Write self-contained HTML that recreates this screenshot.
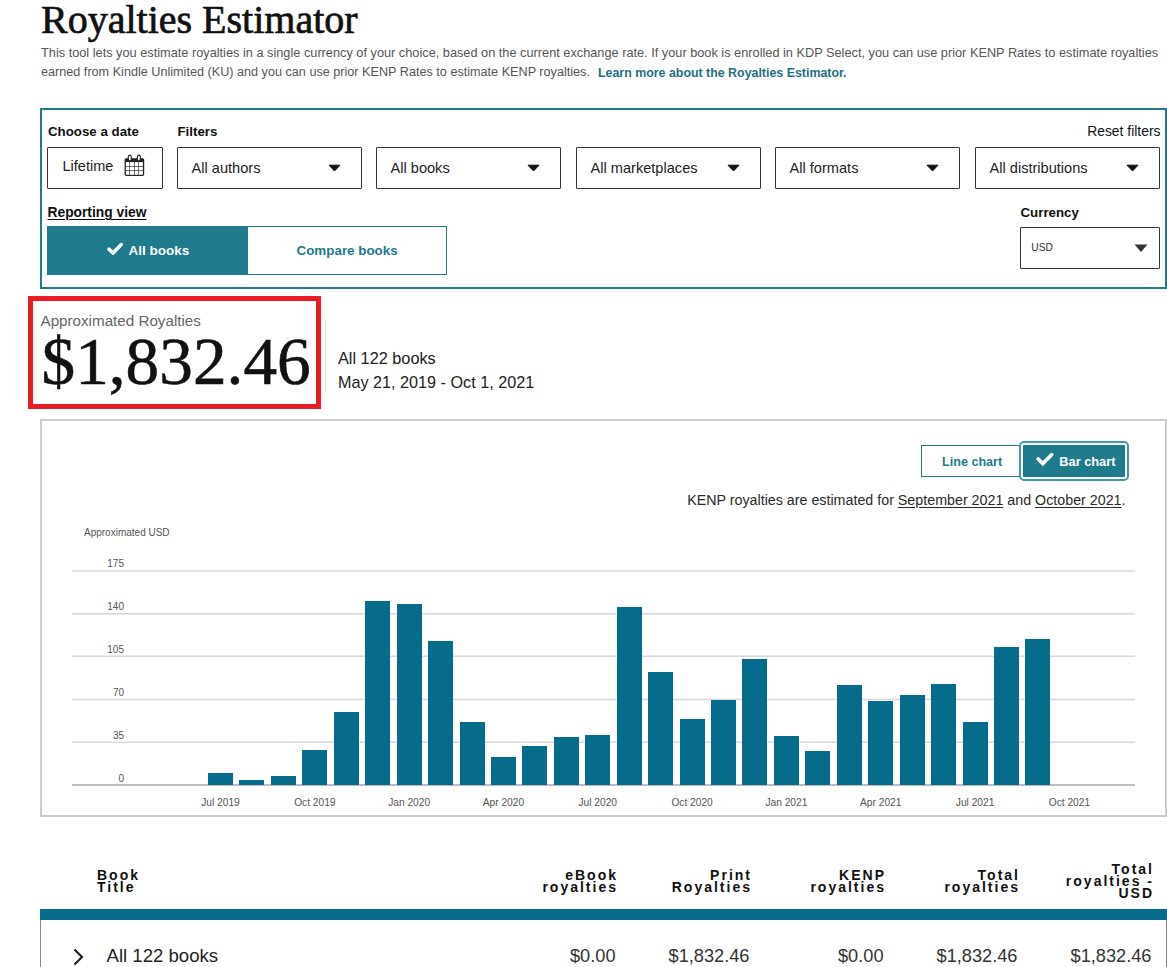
<!DOCTYPE html>
<html><head><meta charset="utf-8"><title>Royalties Estimator</title>
<style>
html,body{margin:0;padding:0;background:#fff;width:1167px;height:967px;overflow:hidden;}
body{position:relative;font-family:"Liberation Sans", sans-serif;}
.t{position:absolute;white-space:nowrap;}
.r{position:absolute;}
u{text-decoration:underline;text-underline-offset:2px;}
</style></head><body>
<div class="t" style="top:0.10px;font-size:40px;line-height:40px;font-weight:400;color:#111;font-family:'Liberation Serif', serif;left:41px;-webkit-text-stroke:0.7px #111;">Royalties Estimator</div>
<div class="t" style="top:46.61px;font-size:12.75px;line-height:12.75px;font-weight:400;color:#555;font-family:'Liberation Sans', sans-serif;left:41px;">This tool lets you estimate royalties in a single currency of your choice, based on the current exchange rate. If your book is enrolled in KDP Select, you can use prior KENP Rates to estimate royalties</div>
<div class="t" style="top:66.39px;font-size:12.65px;line-height:12.65px;font-weight:400;color:#555;font-family:'Liberation Sans', sans-serif;left:41px;">earned from Kindle Unlimited (KU) and you can use prior KENP Rates to estimate KENP royalties.</div>
<div class="t" style="top:66.60px;font-size:12.4px;line-height:12.4px;font-weight:700;color:#1f6f82;font-family:'Liberation Sans', sans-serif;left:598px;">Learn more about the Royalties Estimator.</div>
<div class="r" style="left:40px;top:108px;width:1127px;height:181px;border:2px solid #1f7a8c;box-sizing:border-box;"></div>
<div class="t" style="top:125.24px;font-size:13.3px;line-height:13.3px;font-weight:700;color:#0f1111;font-family:'Liberation Sans', sans-serif;left:48px;">Choose a date</div>
<div class="t" style="top:125.34px;font-size:13.3px;line-height:13.3px;font-weight:700;color:#0f1111;font-family:'Liberation Sans', sans-serif;left:177.5px;">Filters</div>
<div class="t" style="top:125.23px;font-size:13.9px;line-height:13.9px;font-weight:400;color:#0f1111;font-family:'Liberation Sans', sans-serif;right:6.5px;text-align:right;">Reset filters</div>
<div class="r" style="left:47px;top:147px;width:116px;height:42px;border:1px solid #333;box-sizing:border-box;border-radius:1px;"></div>
<div class="t" style="top:158.93px;font-size:14.5px;line-height:14.5px;font-weight:400;color:#222;font-family:'Liberation Sans', sans-serif;left:62.5px;">Lifetime</div>
<svg class="r" style="left:124px;top:154px" width="22" height="23" viewBox="0 0 22 23">
<rect x="0.6" y="4.2" width="19.6" height="17.7" rx="1.6" fill="#222"/><rect x="1.9" y="8.1" width="3.40" height="4.10" fill="#fff"/><rect x="5.9" y="8.1" width="4.30" height="4.10" fill="#fff"/><rect x="10.8" y="8.1" width="3.60" height="4.10" fill="#fff"/><rect x="15.0" y="8.1" width="3.90" height="4.10" fill="#fff"/><rect x="1.9" y="12.8" width="3.40" height="3.30" fill="#fff"/><rect x="5.9" y="12.8" width="4.30" height="3.30" fill="#fff"/><rect x="10.8" y="12.8" width="3.60" height="3.30" fill="#fff"/><rect x="15.0" y="12.8" width="3.90" height="3.30" fill="#fff"/><rect x="1.9" y="16.7" width="3.40" height="4.10" fill="#fff"/><rect x="5.9" y="16.7" width="4.30" height="4.10" fill="#fff"/><rect x="10.8" y="16.7" width="3.60" height="4.10" fill="#fff"/><rect x="15.0" y="16.7" width="3.90" height="4.10" fill="#fff"/>
<ellipse cx="5.8" cy="4.1" rx="1.6" ry="3" fill="#fff" stroke="#222" stroke-width="1.1"/>
<ellipse cx="14.9" cy="4.1" rx="1.6" ry="3" fill="#fff" stroke="#222" stroke-width="1.1"/>
</svg>
<div class="r" style="left:177px;top:147px;width:185px;height:42px;border:1px solid #333;box-sizing:border-box;border-radius:1px;"></div>
<div class="t" style="top:161.44px;font-size:14.6px;line-height:14.6px;font-weight:400;color:#222;font-family:'Liberation Sans', sans-serif;left:191.5px;">All authors</div>
<svg class="r" style="left:328px;top:164px" width="13" height="8" viewBox="0 0 13 8"><path d="M1 1.2 L12 1.2 L6.5 7 Z" fill="#111" stroke="#111" stroke-width="1" stroke-linejoin="round"/></svg>
<div class="r" style="left:376px;top:147px;width:185px;height:42px;border:1px solid #333;box-sizing:border-box;border-radius:1px;"></div>
<div class="t" style="top:161.44px;font-size:14.6px;line-height:14.6px;font-weight:400;color:#222;font-family:'Liberation Sans', sans-serif;left:390.5px;">All books</div>
<svg class="r" style="left:527px;top:164px" width="13" height="8" viewBox="0 0 13 8"><path d="M1 1.2 L12 1.2 L6.5 7 Z" fill="#111" stroke="#111" stroke-width="1" stroke-linejoin="round"/></svg>
<div class="r" style="left:576px;top:147px;width:185px;height:42px;border:1px solid #333;box-sizing:border-box;border-radius:1px;"></div>
<div class="t" style="top:161.44px;font-size:14.6px;line-height:14.6px;font-weight:400;color:#222;font-family:'Liberation Sans', sans-serif;left:590.5px;">All marketplaces</div>
<svg class="r" style="left:727px;top:164px" width="13" height="8" viewBox="0 0 13 8"><path d="M1 1.2 L12 1.2 L6.5 7 Z" fill="#111" stroke="#111" stroke-width="1" stroke-linejoin="round"/></svg>
<div class="r" style="left:775px;top:147px;width:185px;height:42px;border:1px solid #333;box-sizing:border-box;border-radius:1px;"></div>
<div class="t" style="top:161.44px;font-size:14.6px;line-height:14.6px;font-weight:400;color:#222;font-family:'Liberation Sans', sans-serif;left:789.5px;">All formats</div>
<svg class="r" style="left:926px;top:164px" width="13" height="8" viewBox="0 0 13 8"><path d="M1 1.2 L12 1.2 L6.5 7 Z" fill="#111" stroke="#111" stroke-width="1" stroke-linejoin="round"/></svg>
<div class="r" style="left:975px;top:147px;width:185px;height:42px;border:1px solid #333;box-sizing:border-box;border-radius:1px;"></div>
<div class="t" style="top:161.44px;font-size:14.6px;line-height:14.6px;font-weight:400;color:#222;font-family:'Liberation Sans', sans-serif;left:989.5px;">All distributions</div>
<svg class="r" style="left:1126px;top:164px" width="13" height="8" viewBox="0 0 13 8"><path d="M1 1.2 L12 1.2 L6.5 7 Z" fill="#111" stroke="#111" stroke-width="1" stroke-linejoin="round"/></svg>
<div class="t" style="top:206.12px;font-size:13.8px;line-height:13.8px;font-weight:700;color:#0f1111;font-family:'Liberation Sans', sans-serif;left:47.5px;"><u>Reporting view</u></div>
<div class="t" style="top:205.74px;font-size:13.3px;line-height:13.3px;font-weight:700;color:#0f1111;font-family:'Liberation Sans', sans-serif;left:1020.5px;">Currency</div>
<div class="r" style="left:47px;top:226px;width:201px;height:49px;background:#1f7a8c;"></div>
<svg class="r" style="left:107px;top:242px" width="16" height="13" viewBox="0 0 16 13"><path d="M2 7.2 L6 11 L14.2 2.6" fill="none" stroke="#fff" stroke-width="3.6" stroke-linecap="round"/></svg>
<div class="t" style="top:243.87px;font-size:13.5px;line-height:13.5px;font-weight:700;color:#fff;font-family:'Liberation Sans', sans-serif;left:128.5px;">All books</div>
<div class="r" style="left:247px;top:226px;width:200px;height:49px;border:1px solid #1f7a8c;box-sizing:border-box;"></div>
<div class="t" style="top:244.26px;font-size:13.4px;line-height:13.4px;font-weight:700;color:#1f7a8c;font-family:'Liberation Sans', sans-serif;left:296.5px;">Compare books</div>
<div class="r" style="left:1020px;top:227px;width:140px;height:42px;border:1px solid #333;box-sizing:border-box;border-radius:1px;"></div>
<div class="t" style="top:243.37px;font-size:10.2px;line-height:10.2px;font-weight:400;color:#333;font-family:'Liberation Sans', sans-serif;left:1031.3px;">USD</div>
<svg class="r" style="left:1134px;top:244px" width="14" height="9" viewBox="0 0 14 9"><path d="M0.5 0.5 L13.5 0.5 L7 8 Z" fill="#333"/></svg>
<div class="r" style="left:28px;top:296px;width:293px;height:113px;border:5px solid #ea1c25;box-sizing:border-box;"></div>
<div class="t" style="top:313.33px;font-size:15.2px;line-height:15.2px;font-weight:400;color:#666;font-family:'Liberation Sans', sans-serif;left:40.5px;">Approximated Royalties</div>
<div class="t" style="top:328.44px;font-size:67.3px;line-height:67.3px;font-weight:400;color:#111;font-family:'Liberation Serif', serif;left:41.5px;-webkit-text-stroke:0.6px #111;">$1,832.46</div>
<div class="r" style="left:325px;top:321px;width:1px;height:70px;background:#d5d5d5;"></div>
<div class="t" style="top:350.20px;font-size:16.3px;line-height:16.3px;font-weight:400;color:#222;font-family:'Liberation Sans', sans-serif;left:338px;">All 122 books</div>
<div class="t" style="top:373.99px;font-size:16.2px;line-height:16.2px;font-weight:400;color:#222;font-family:'Liberation Sans', sans-serif;left:338px;">May 21, 2019 - Oct 1, 2021</div>
<div class="r" style="left:40px;top:419px;width:1127px;height:398px;border:2px solid #ccc;box-sizing:border-box;"></div>
<div class="r" style="left:921px;top:445px;width:100px;height:32px;border:1px solid #1f7a8c;box-sizing:border-box;"></div>
<div class="t" style="top:456.33px;font-size:12.6px;line-height:12.6px;font-weight:700;color:#1f7a8c;font-family:'Liberation Sans', sans-serif;left:942px;">Line chart</div>
<div class="r" style="left:1019px;top:441px;width:110px;height:40px;border:2px solid #3f9cb0;border-radius:5px;box-sizing:border-box;"></div>
<div class="r" style="left:1023px;top:445px;width:102px;height:32px;background:#1f7a8c;border-radius:1px;"></div>
<svg class="r" style="left:1036px;top:452px" width="18" height="15" viewBox="0 0 18 15"><path d="M2.2 7 L6.8 11.6 L15.8 2.6" fill="none" stroke="#fff" stroke-width="3.6" stroke-linecap="round"/></svg>
<div class="t" style="top:456.16px;font-size:12.8px;line-height:12.8px;font-weight:700;color:#fff;font-family:'Liberation Sans', sans-serif;left:1059.3px;">Bar chart</div>
<div class="t" style="top:492.71px;font-size:14.28px;line-height:14.28px;font-weight:400;color:#2a2a2a;font-family:'Liberation Sans', sans-serif;right:41.5px;text-align:right;">KENP royalties are estimated for <u>September 2021</u> and <u>October 2021</u>.</div>
<div class="t" style="top:527.83px;font-size:10px;line-height:10px;font-weight:400;color:#555;font-family:'Liberation Sans', sans-serif;left:84px;">Approximated USD</div>
<svg class="r" style="left:0;top:0" width="1167" height="967"><line x1="72" x2="1135" y1="571.0" y2="571.0" stroke="#d8d8d8" stroke-width="1.4"/><line x1="72" x2="1135" y1="613.7" y2="613.7" stroke="#d8d8d8" stroke-width="1.4"/><line x1="72" x2="1135" y1="656.3" y2="656.3" stroke="#d8d8d8" stroke-width="1.4"/><line x1="72" x2="1135" y1="699.5" y2="699.5" stroke="#d8d8d8" stroke-width="1.4"/><line x1="72" x2="1135" y1="742.3" y2="742.3" stroke="#d8d8d8" stroke-width="1.4"/></svg>
<div class="t" style="top:559.33px;font-size:10px;line-height:10px;font-weight:400;color:#555;font-family:'Liberation Sans', sans-serif;right:1043px;text-align:right;">175</div>
<div class="t" style="top:602.03px;font-size:10px;line-height:10px;font-weight:400;color:#555;font-family:'Liberation Sans', sans-serif;right:1043px;text-align:right;">140</div>
<div class="t" style="top:644.63px;font-size:10px;line-height:10px;font-weight:400;color:#555;font-family:'Liberation Sans', sans-serif;right:1043px;text-align:right;">105</div>
<div class="t" style="top:687.83px;font-size:10px;line-height:10px;font-weight:400;color:#555;font-family:'Liberation Sans', sans-serif;right:1043px;text-align:right;">70</div>
<div class="t" style="top:730.63px;font-size:10px;line-height:10px;font-weight:400;color:#555;font-family:'Liberation Sans', sans-serif;right:1043px;text-align:right;">35</div>
<div class="t" style="top:773.53px;font-size:10px;line-height:10px;font-weight:400;color:#555;font-family:'Liberation Sans', sans-serif;right:1043px;text-align:right;">0</div>
<div class="r" style="left:72px;top:784px;width:1063px;height:2px;background:#bdbdbd;"></div>
<div class="r" style="left:208.00px;top:772.8px;width:25px;height:12.4px;background:#076b8c;"></div>
<div class="r" style="left:239.44px;top:780.0px;width:25px;height:5.2px;background:#076b8c;"></div>
<div class="r" style="left:270.88px;top:776.0px;width:25px;height:9.2px;background:#076b8c;"></div>
<div class="r" style="left:302.32px;top:750.3px;width:25px;height:34.9px;background:#076b8c;"></div>
<div class="r" style="left:333.76px;top:712.0px;width:25px;height:73.2px;background:#076b8c;"></div>
<div class="r" style="left:365.20px;top:600.6px;width:25px;height:184.6px;background:#076b8c;"></div>
<div class="r" style="left:396.64px;top:603.9px;width:25px;height:181.3px;background:#076b8c;"></div>
<div class="r" style="left:428.08px;top:641.4px;width:25px;height:143.8px;background:#076b8c;"></div>
<div class="r" style="left:459.52px;top:722.3px;width:25px;height:62.9px;background:#076b8c;"></div>
<div class="r" style="left:490.96px;top:756.6px;width:25px;height:28.6px;background:#076b8c;"></div>
<div class="r" style="left:522.40px;top:746.2px;width:25px;height:39.0px;background:#076b8c;"></div>
<div class="r" style="left:553.84px;top:737.2px;width:25px;height:48.0px;background:#076b8c;"></div>
<div class="r" style="left:585.28px;top:734.8px;width:25px;height:50.4px;background:#076b8c;"></div>
<div class="r" style="left:616.72px;top:606.9px;width:25px;height:178.3px;background:#076b8c;"></div>
<div class="r" style="left:648.16px;top:671.7px;width:25px;height:113.5px;background:#076b8c;"></div>
<div class="r" style="left:679.60px;top:719.1px;width:25px;height:66.1px;background:#076b8c;"></div>
<div class="r" style="left:711.04px;top:699.6px;width:25px;height:85.6px;background:#076b8c;"></div>
<div class="r" style="left:742.48px;top:658.7px;width:25px;height:126.5px;background:#076b8c;"></div>
<div class="r" style="left:773.92px;top:736.0px;width:25px;height:49.2px;background:#076b8c;"></div>
<div class="r" style="left:805.36px;top:751.3px;width:25px;height:33.9px;background:#076b8c;"></div>
<div class="r" style="left:836.80px;top:684.6px;width:25px;height:100.6px;background:#076b8c;"></div>
<div class="r" style="left:868.24px;top:700.8px;width:25px;height:84.4px;background:#076b8c;"></div>
<div class="r" style="left:899.68px;top:694.6px;width:25px;height:90.6px;background:#076b8c;"></div>
<div class="r" style="left:931.12px;top:684.4px;width:25px;height:100.8px;background:#076b8c;"></div>
<div class="r" style="left:962.56px;top:722.2px;width:25px;height:63.0px;background:#076b8c;"></div>
<div class="r" style="left:994.00px;top:646.9px;width:25px;height:138.3px;background:#076b8c;"></div>
<div class="r" style="left:1025.44px;top:639.3px;width:25px;height:145.9px;background:#076b8c;"></div>
<div class="t" style="top:797.97px;font-size:10.2px;line-height:10.2px;font-weight:400;color:#555;font-family:'Liberation Sans', sans-serif;left:-79.5px;width:600px;text-align:center;">Jul 2019</div>
<div class="t" style="top:797.97px;font-size:10.2px;line-height:10.2px;font-weight:400;color:#555;font-family:'Liberation Sans', sans-serif;left:14.819999999999993px;width:600px;text-align:center;">Oct 2019</div>
<div class="t" style="top:797.97px;font-size:10.2px;line-height:10.2px;font-weight:400;color:#555;font-family:'Liberation Sans', sans-serif;left:109.13999999999999px;width:600px;text-align:center;">Jan 2020</div>
<div class="t" style="top:797.97px;font-size:10.2px;line-height:10.2px;font-weight:400;color:#555;font-family:'Liberation Sans', sans-serif;left:203.46000000000004px;width:600px;text-align:center;">Apr 2020</div>
<div class="t" style="top:797.97px;font-size:10.2px;line-height:10.2px;font-weight:400;color:#555;font-family:'Liberation Sans', sans-serif;left:297.78px;width:600px;text-align:center;">Jul 2020</div>
<div class="t" style="top:797.97px;font-size:10.2px;line-height:10.2px;font-weight:400;color:#555;font-family:'Liberation Sans', sans-serif;left:392.1px;width:600px;text-align:center;">Oct 2020</div>
<div class="t" style="top:797.97px;font-size:10.2px;line-height:10.2px;font-weight:400;color:#555;font-family:'Liberation Sans', sans-serif;left:486.4200000000001px;width:600px;text-align:center;">Jan 2021</div>
<div class="t" style="top:797.97px;font-size:10.2px;line-height:10.2px;font-weight:400;color:#555;font-family:'Liberation Sans', sans-serif;left:580.74px;width:600px;text-align:center;">Apr 2021</div>
<div class="t" style="top:797.97px;font-size:10.2px;line-height:10.2px;font-weight:400;color:#555;font-family:'Liberation Sans', sans-serif;left:675.0600000000001px;width:600px;text-align:center;">Jul 2021</div>
<div class="t" style="top:797.97px;font-size:10.2px;line-height:10.2px;font-weight:400;color:#555;font-family:'Liberation Sans', sans-serif;left:769.3800000000001px;width:600px;text-align:center;">Oct 2021</div>
<div class="t" style="top:867.65px;font-size:14px;line-height:14px;font-weight:700;color:#111;font-family:'Liberation Sans', sans-serif;letter-spacing:2.0px;left:97px;">Book</div>
<div class="t" style="top:879.65px;font-size:14px;line-height:14px;font-weight:700;color:#111;font-family:'Liberation Sans', sans-serif;letter-spacing:2.0px;left:97px;">Title</div>
<div class="t" style="top:867.65px;font-size:14px;line-height:14px;font-weight:700;color:#111;font-family:'Liberation Sans', sans-serif;letter-spacing:2.0px;right:549.0px;text-align:right;">eBook</div>
<div class="t" style="top:879.65px;font-size:14px;line-height:14px;font-weight:700;color:#111;font-family:'Liberation Sans', sans-serif;letter-spacing:2.0px;right:549.0px;text-align:right;">royalties</div>
<div class="t" style="top:867.65px;font-size:14px;line-height:14px;font-weight:700;color:#111;font-family:'Liberation Sans', sans-serif;letter-spacing:2.0px;right:415.0px;text-align:right;">Print</div>
<div class="t" style="top:879.65px;font-size:14px;line-height:14px;font-weight:700;color:#111;font-family:'Liberation Sans', sans-serif;letter-spacing:2.0px;right:415.0px;text-align:right;">Royalties</div>
<div class="t" style="top:867.65px;font-size:14px;line-height:14px;font-weight:700;color:#111;font-family:'Liberation Sans', sans-serif;letter-spacing:2.0px;right:281.0px;text-align:right;">KENP</div>
<div class="t" style="top:879.65px;font-size:14px;line-height:14px;font-weight:700;color:#111;font-family:'Liberation Sans', sans-serif;letter-spacing:2.0px;right:281.0px;text-align:right;">royalties</div>
<div class="t" style="top:867.65px;font-size:14px;line-height:14px;font-weight:700;color:#111;font-family:'Liberation Sans', sans-serif;letter-spacing:2.0px;right:147.0px;text-align:right;">Total</div>
<div class="t" style="top:879.65px;font-size:14px;line-height:14px;font-weight:700;color:#111;font-family:'Liberation Sans', sans-serif;letter-spacing:2.0px;right:147.0px;text-align:right;">royalties</div>
<div class="t" style="top:861.75px;font-size:14px;line-height:14px;font-weight:700;color:#111;font-family:'Liberation Sans', sans-serif;letter-spacing:2.0px;right:13.0px;text-align:right;">Total</div>
<div class="t" style="top:873.85px;font-size:14px;line-height:14px;font-weight:700;color:#111;font-family:'Liberation Sans', sans-serif;letter-spacing:2.0px;right:13.0px;text-align:right;">royalties -</div>
<div class="t" style="top:885.75px;font-size:14px;line-height:14px;font-weight:700;color:#111;font-family:'Liberation Sans', sans-serif;letter-spacing:2.0px;right:13.0px;text-align:right;">USD</div>
<div class="r" style="left:40px;top:909px;width:1127px;height:11px;background:#076b8c;"></div>
<div class="r" style="left:40px;top:920px;width:1px;height:47px;background:#8a8a8a;"></div>
<div class="r" style="left:1166px;top:920px;width:1px;height:47px;background:#8a8a8a;"></div>
<svg class="r" style="left:72px;top:948px" width="13" height="18" viewBox="0 0 13 18"><path d="M2.5 1.5 L10 9 L2.5 16.5" fill="none" stroke="#222" stroke-width="2.2"/></svg>
<div class="t" style="top:946.86px;font-size:18.6px;line-height:18.6px;font-weight:400;color:#222;font-family:'Liberation Sans', sans-serif;left:106.5px;">All 122 books</div>
<div class="t" style="top:946.99px;font-size:18.2px;line-height:18.2px;font-weight:400;color:#333;font-family:'Liberation Sans', sans-serif;right:551.5px;text-align:right;">$0.00</div>
<div class="t" style="top:946.99px;font-size:18.2px;line-height:18.2px;font-weight:400;color:#333;font-family:'Liberation Sans', sans-serif;right:417.5px;text-align:right;">$1,832.46</div>
<div class="t" style="top:946.99px;font-size:18.2px;line-height:18.2px;font-weight:400;color:#333;font-family:'Liberation Sans', sans-serif;right:283.5px;text-align:right;">$0.00</div>
<div class="t" style="top:946.99px;font-size:18.2px;line-height:18.2px;font-weight:400;color:#333;font-family:'Liberation Sans', sans-serif;right:149.5px;text-align:right;">$1,832.46</div>
<div class="t" style="top:946.99px;font-size:18.2px;line-height:18.2px;font-weight:400;color:#333;font-family:'Liberation Sans', sans-serif;right:15.5px;text-align:right;">$1,832.46</div>
</body></html>
